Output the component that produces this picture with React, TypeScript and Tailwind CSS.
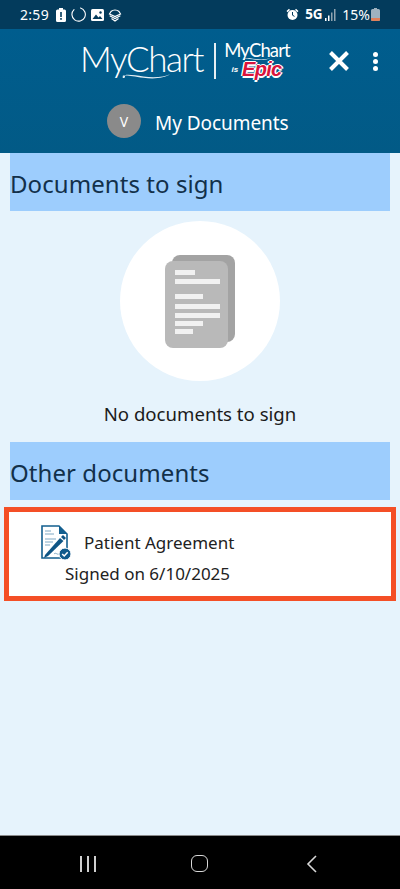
import React from "react";

const Swoosh = ({ w, h }: { w: number; h: number }) => (
  <svg width={w} height={h} viewBox="0 0 112 16" fill="none" className="block">
    <path d="M2 8C4 3 9 5 8 9C7 13 1 12 3 8C6 3 22 7 50 11C75 14 98 12 111 3C98 9 75 12 50 8C28 5 8 1 2 8Z" fill="#fff" fillOpacity="0.9" />
  </svg>
);

const StatusBar = () => (
  <div className="h-[29px] bg-[#033b5c] flex items-center justify-between pl-5 pr-[20px] text-white shrink-0">
    <div className="flex items-center gap-[4px]">
      <span className="text-[14px] leading-none tracking-[0.3px] mr-[3px]">2:59</span>
      <svg width="10" height="14" viewBox="0 0 10 14"><path d="M3 0h4v1.5h1.5A1.5 1.5 0 0 1 10 3v9.5A1.5 1.5 0 0 1 8.5 14h-7A1.5 1.5 0 0 1 0 12.5V3a1.5 1.5 0 0 1 1.5-1.5H3Z" fill="#fff" /><rect x="4.2" y="4" width="1.6" height="5" fill="#033b5c" /><rect x="4.2" y="10" width="1.6" height="1.8" fill="#033b5c" /></svg>
      <svg width="15" height="15" viewBox="0 0 15 15" fill="none" className="ml-[1px]"><path d="M9.5 1A6.7 6.7 0 1 1 3 2.6" stroke="#fff" strokeWidth="1.1" strokeLinecap="round" /></svg>
      <svg width="13" height="12" viewBox="0 0 13 12" className="ml-[1px]"><rect width="13" height="12" rx="1.5" fill="#fff" /><path d="M1.5 10 5 5.5l2.5 3 1.5-1.5 2.5 3Z" fill="#033b5c" /><circle cx="9.5" cy="3.5" r="1.2" fill="#033b5c" /></svg>
      <svg width="14" height="14" viewBox="0 0 14 14" fill="none" stroke="#fff" strokeWidth="1.2"><path d="M3 3.5C5 1.500 9 1.500 11 3.500L12.500 6 7 8.500 1.500 6Z" /><path d="M1.700 7.700 7 10.500l5.300-2.800" /><path d="M3.500 10.500 7 13l3.500-2.500" /></svg>
    </div>
    <div className="flex items-center">
      <svg width="13" height="13" viewBox="0 0 13 13" className="mr-[6px]"><circle cx="6.5" cy="7" r="5" fill="#fff" /><path d="M0.5 3 3 .8 4 2 1.500 4.200ZM12.500 3 10 .8 9 2l2.500 2.200Z" fill="#fff" /><path d="M6.500 4v3.200l2 1.200" stroke="#033b5c" fill="none" strokeWidth="1" /></svg>
      <span className="text-[13.5px] font-bold leading-none mr-[3px] tracking-[-0.2px]">5G</span>
      <svg width="11" height="12" viewBox="0 0 11 12" className="mr-[6px]"><rect x="0" y="9" width="1.500" height="3" fill="#fff" /><rect x="3" y="6.500" width="1.500" height="5.500" fill="#fff" /><rect x="6" y="3.500" width="1.500" height="8.500" fill="#8fa3b0" /><rect x="9" y="0" width="1.500" height="12" fill="#8fa3b0" /></svg>
      <span className="text-[14px] leading-none mr-[1px]">15%</span>
      <svg width="9" height="13" viewBox="0 0 9 13"><path d="M3 0h3v1h1.500A1.500 1.500 0 0 1 9 2.500v9A1.500 1.500 0 0 1 7.500 13h-6A1.500 1.500 0 0 1 0 11.500v-9A1.500 1.500 0 0 1 1.500 1H3Z" fill="#9fb2bf" /><path d="M0 10h9v1.500A1.500 1.500 0 0 1 7.500 13h-6A1.500 1.500 0 0 1 0 11.500Z" fill="#e0805a" /></svg>
    </div>
  </div>
);

const Logos = () => (
  <div className="flex items-start h-[50px] mt-[13px]">
    <div className="flex flex-col w-[122px] ml-[80px]">
      <span className="text-[35px] leading-[32px] text-white font-[Lato] font-light tracking-[-1.4px] h-[31px]">MyChart</span>
      <div className="ml-[19px]"><Swoosh w={94} h={7} /></div>
    </div>
    <div className="w-[2px] h-[36px] bg-white/90 ml-[12px] mt-[1px]" />
    <div className="flex flex-col items-center ml-[9px] w-[64px]">
      <span className="text-[18.5px] leading-[16px] text-white font-[Lato] font-normal tracking-[-0.9px] h-[15px]">MyChart</span>
      <Swoosh w={46} h={4} />
      <div className="flex items-center gap-[4px] -ml-[1px]">
        <span className="text-[8px] leading-[10px] italic font-bold text-white font-['Liberation_Sans']">is</span>
        <span className="text-[20px] leading-[17px] italic font-black text-[#d9143c] font-['Liberation_Sans'] tracking-[-0.7px] [text-shadow:1.5px_0_#fff,-1.5px_0_#fff,0_1.5px_#fff,0_-1.5px_#fff]">Epic</span>
      </div>
    </div>
  </div>
);

const Header = () => (
  <div className="h-[124px] shrink-0 bg-gradient-to-b from-[#005d8e] to-[#025a86] relative text-white flex flex-col">
    <Logos />
    <div className="flex items-center pl-[107px] mt-[12px] h-[34px]">
      <div className="w-[34px] h-[34px] rounded-full bg-[#8a8a8a] flex items-center justify-center text-[14px] text-white">V</div>
      <span className="ml-[14px] text-[19px] leading-[34px] tracking-[-0.05px] pt-[3px]">My Documents</span>
    </div>
    <button className="absolute left-[328px] top-[21px]" aria-label="Close">
      <svg width="22" height="22" viewBox="0 0 22 22" className="block"><path d="M2.500 2.500 19.500 19.500M19.500 2.500 2.500 19.500" stroke="#fff" strokeWidth="4" /></svg>
    </button>
    <button className="absolute left-[373px] top-[23px] flex flex-col gap-[2px]" aria-label="More">
      <span className="w-[5px] h-[5px] rounded-full bg-white" />
      <span className="w-[5px] h-[5px] rounded-full bg-white" />
      <span className="w-[5px] h-[5px] rounded-full bg-white" />
    </button>
  </div>
);

const SectionHeading = ({ children }: { children: React.ReactNode }) => (
  <h2 className="mx-[10px] h-[58px] bg-[#9dcdfd] flex items-center pt-[4px] text-[24px] tracking-[0.07px] leading-none text-[#12304a]">{children}</h2>
);

const PaperIcon = () => (
  <svg width="70" height="93" viewBox="0 0 70 93" className="block">
    <rect x="7" y="0" width="63" height="87" rx="8" fill="#a3a3a3" />
    <rect x="0" y="6" width="63" height="87" rx="8" fill="#b9b9b9" />
    <g fill="#f1f1f1">
      <rect x="10" y="15" width="20" height="5" />
      <rect x="10" y="24" width="45" height="5" />
      <rect x="10" y="39" width="28" height="5" />
      <rect x="10" y="49" width="45" height="5" />
      <rect x="10" y="58" width="45" height="5" />
      <rect x="10" y="66" width="28" height="5" />
      <rect x="10" y="74" width="18" height="5" />
    </g>
  </svg>
);

const SignedDocIcon = () => (
  <svg width="32" height="36" viewBox="0 0 32 36" fill="none" className="block">
    <path d="M2 1h17l8 8v24H2Z" fill="#fff" stroke="#135f8f" strokeWidth="1.600" />
    <path d="M19 1v8h8Z" fill="#135f8f" />
    <path d="M5 6h6M5 9h9M5 14h11M5 17h8M5 20h5M14 29c2-2 3 1 5 0s2-1 4-1" stroke="#7fa9c4" strokeWidth="1" />
    <path d="M5 30 20 13l3.500 3L8 31l-4 2Z" fill="#0f5585" />
    <path d="M21 12l2-2 3 3-2 2Z" fill="#0f5585" />
    <circle cx="25" cy="29" r="6" fill="#0f5a8c" stroke="#fff" strokeWidth="1" />
    <path d="M22.200 29l2 2 3.500-3.800" stroke="#fff" strokeWidth="1.500" />
  </svg>
);

const NavBar = () => (
  <div className="h-[54px] shrink-0 bg-black border-t border-[#8a8a8a] flex items-start">
    <div className="ml-[80px] mt-[20px] flex gap-[5px]">
      <span className="w-[2px] h-[16px] bg-[#cfcfcf]" />
      <span className="w-[2px] h-[16px] bg-[#cfcfcf]" />
      <span className="w-[2px] h-[16px] bg-[#cfcfcf]" />
    </div>
    <div className="ml-[95px] mt-[19px] w-[17px] h-[17px] rounded-[6px] border-[1.5px] border-[#d8d8d8]" />
    <svg width="11" height="18" viewBox="0 0 11 18" fill="none" className="ml-[98px] mt-[19px]"><path d="M10 1 2 9l8 8" stroke="#d8d8d8" strokeWidth="1.600" /></svg>
  </div>
);

export default function App() {
  return (
    <div className="w-[400px] h-[889px] flex flex-col overflow-hidden bg-[#e6f3fc] font-['Noto_Sans',sans-serif]">
      <StatusBar />
      <Header />
      <main className="flex-1 flex flex-col">
        <SectionHeading>Documents to sign</SectionHeading>
        <div className="mx-auto mt-[10px] w-[160px] h-[160px] rounded-full bg-white flex items-center justify-center">
          <PaperIcon />
        </div>
        <p className="mt-[21px] h-[24px] text-center text-[18.6px] leading-[24px] text-[#1b1b1b]">No documents to sign</p>
        <div className="h-[16px]" />
        <SectionHeading>Other documents</SectionHeading>
        <div className="mx-[4px] mt-[7px] h-[94px] border-[5px] border-[#f44f26] bg-white flex flex-col">
          <div className="flex items-center pl-[31px] pt-[13px]">
            <SignedDocIcon />
            <span className="ml-[12px] text-[17px] leading-[24px] text-[#222]">Patient Agreement</span>
          </div>
          <span className="pl-[56px] text-[17px] leading-[24px] text-[#222] mt-[1px]">Signed on 6/10/2025</span>
        </div>
      </main>
      <NavBar />
    </div>
  );
}
